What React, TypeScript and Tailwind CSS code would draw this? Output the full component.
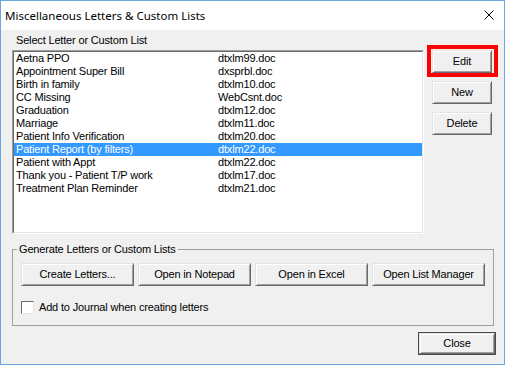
import React from 'react'

const ITEMS: [string, string][] = [
    ['Aetna PPO', 'dtxlm99.doc'],
    ['Appointment Super Bill', 'dxsprbl.doc'],
    ['Birth in family', 'dtxlm10.doc'],
    ['CC Missing', 'WebCsnt.doc'],
    ['Graduation', 'dtxlm12.doc'],
    ['Marriage', 'dtxlm11.doc'],
    ['Patient Info Verification', 'dtxlm20.doc'],
    ['Patient Report (by filters)', 'dtxlm22.doc'],
    ['Patient with Appt', 'dtxlm22.doc'],
    ['Thank you - Patient T/P work', 'dtxlm17.doc'],
    ['Treatment Plan Reminder', 'dtxlm21.doc'],
]

const SELECTED = 7

const btn =
    'flex items-center justify-center bg-[#f0f0f0] text-black text-[11px] tracking-[-0.17px] leading-none border border-t-[#e3e3e3] border-l-[#e3e3e3] border-r-[#696969] border-b-[#696969] shadow-[inset_1px_1px_0_#ffffff,inset_-1px_-1px_0_#a0a0a0]'

const Button = ({ label, className = '' }: { label: string; className?: string }) => (
    <div className={`${btn} ${className}`}>{label}</div>
)

export default function App() {
    return (
        <div
            className="w-[505px] h-[365px] flex flex-col border border-[#6ea6e0] bg-[#f0f0f0] overflow-hidden tracking-[-0.17px]"
            style={{ fontFamily: '"Liberation Sans", Arial, sans-serif' }}
        >
            {/* title bar */}
            <div className="h-[29px] shrink-0 bg-white flex items-center justify-between pl-[4px] pr-[10px]">
                <span className="text-[11.5px] tracking-normal text-black" style={{ fontFamily: '"Noto Sans", "Open Sans", sans-serif' }}>
                    Miscellaneous Letters &amp; Custom Lists
                </span>
                <svg width="10" height="10" viewBox="0 0 10 10" className="mb-[1px]">
                    <path d="M0.5 0.5 L9.5 9.5 M9.5 0.5 L0.5 9.5" stroke="#000" strokeWidth="1" fill="none" />
                </svg>
            </div>

            <div className="flex-1 flex flex-col pl-[11px]">
                <div className="pt-[4px] pl-[4px] h-[20px] text-[11px] leading-[12px] text-black">
                    Select Letter or Custom List
                </div>

                <div className="flex">
                    {/* list box */}
                    <div className="w-[412px] h-[184px] border border-t-[#a0a0a0] border-l-[#a0a0a0] border-r-white border-b-white">
                        <div className="w-full h-full bg-white border border-t-[#696969] border-l-[#696969] border-r-[#e3e3e3] border-b-[#e3e3e3]">
                            {ITEMS.map(([name, file], i) => (
                                <div
                                    key={name}
                                    className={`flex h-[13px] items-center pl-[2px] text-[11px] leading-none ${
                                        i === SELECTED ? 'bg-[#3399ff] text-white' : 'text-black'
                                    }`}
                                >
                                    <span className="w-[202px] shrink-0 whitespace-nowrap">{name}</span>
                                    <span>{file}</span>
                                </div>
                            ))}
                        </div>
                    </div>

                    {/* side buttons */}
                    <div className="ml-[8px] flex flex-col gap-[8px]">
                        <div className="relative">
                            <Button label="Edit" className="w-[60px] h-[23px]" />
                            <div className="absolute -left-[5px] -top-[5px] -right-[6px] -bottom-[4px] border-[4px] border-[#ff0000]" />
                        </div>
                        <Button label="New" className="w-[60px] h-[23px]" />
                        <Button label="Delete" className="w-[60px] h-[23px]" />
                    </div>
                </div>

                {/* group */}
                <fieldset className="mt-[9px] w-[482px] border border-[#a0a0a0] pl-[8px] pb-[11px]">
                    <legend className="-ml-[4px] px-[2px] text-[11px] leading-[12px] text-black">
                        Generate Letters or Custom Lists
                    </legend>
                    <div className="flex gap-[4px] pt-[8px]">
                        <Button label="Create Letters..." className="w-[113px] h-[23px]" />
                        <Button label="Open in Notepad" className="w-[113px] h-[23px]" />
                        <Button label="Open in Excel" className="w-[113px] h-[23px]" />
                        <Button label="Open List Manager" className="w-[113px] h-[23px]" />
                    </div>
                    <div className="flex items-center mt-[15px] h-[13px]">
                        <div className="w-[13px] h-[13px] bg-white border border-t-[#696969] border-l-[#696969] border-r-[#e3e3e3] border-b-[#e3e3e3]" />
                        <span className="ml-[5px] text-[11px] leading-none text-black">
                            Add to Journal when creating letters
                        </span>
                    </div>
                </fieldset>

                <div className="flex justify-end pr-[8px] mt-[6px]">
                    <div className="border border-[#4a4a4a]">
                        <Button label="Close" className="w-[76px] h-[21px]" />
                    </div>
                </div>
            </div>
        </div>
    )
}
